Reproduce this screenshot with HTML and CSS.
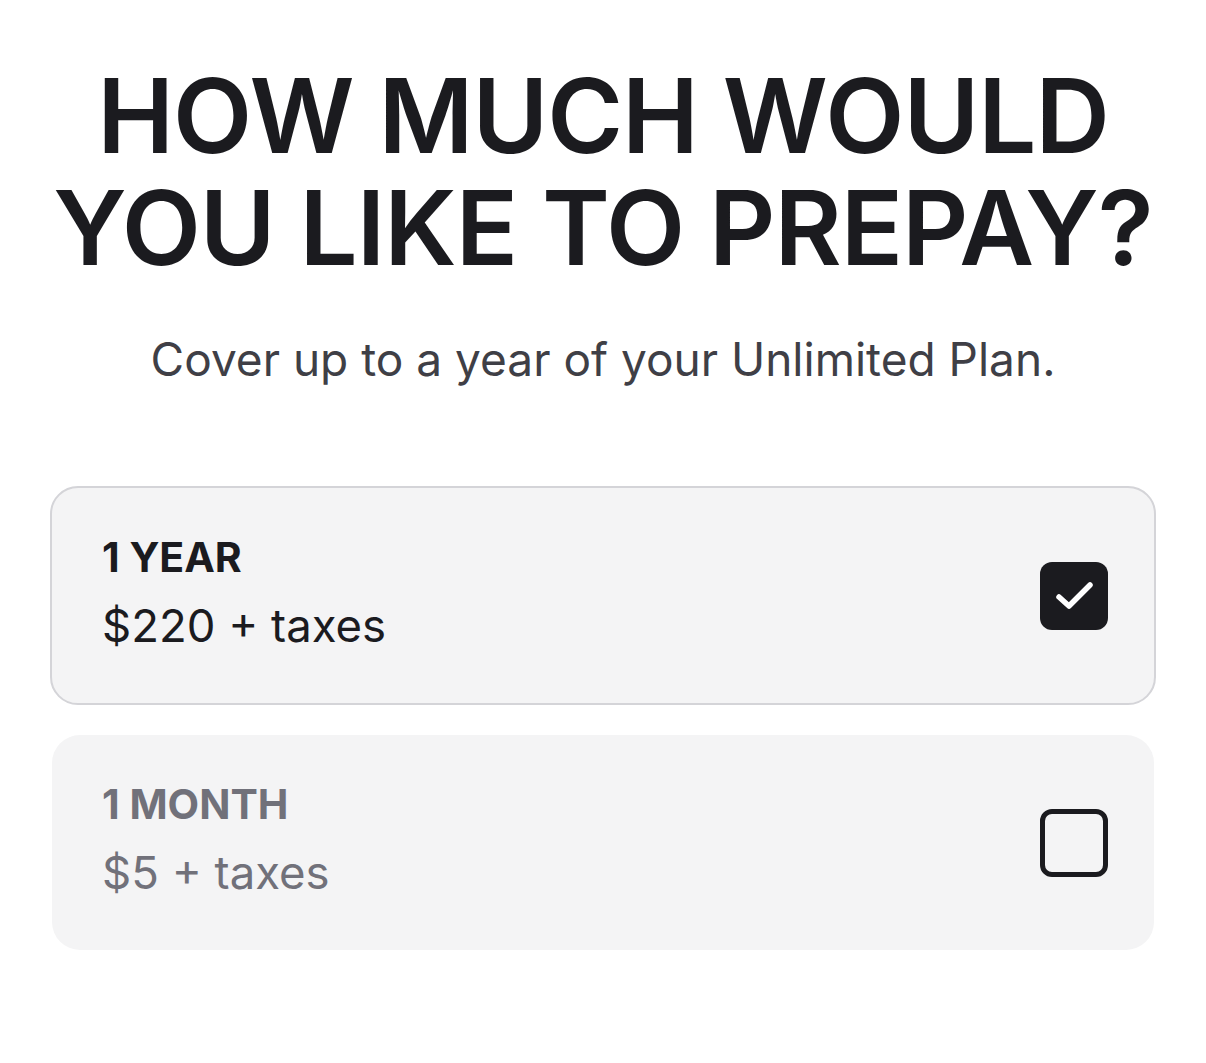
FILE: index.html
```html
<!DOCTYPE html>
<html lang="en">
<head>
    <meta charset="UTF-8">
    <meta name="viewport" content="width=device-width, initial-scale=1.0">
    <title>Prepay</title>
    <link rel="stylesheet" href="styles.css">
</head>
<body>

<div class="container">
    <h1>How much would<br>you like to prepay?</h1>
    <p class="subtitle">Cover up to a year of your Unlimited Plan.</p>

    <div class="options">
        <div class="option selected">
            <div class="option-text">
                <span class="option-title">1 Year</span>
                <span class="option-price">$220 + taxes</span>
            </div>
            <span class="checkbox checked">
                <svg viewBox="0 0 68 68" width="68" height="68">
                    <path d="M19 35 L29 44 L50 23" fill="none" stroke="#fff" stroke-width="5.5" stroke-linecap="round" stroke-linejoin="round"/>
                </svg>
            </span>
        </div>
        <div class="option">
            <div class="option-text">
                <span class="option-title">1 Month</span>
                <span class="option-price">$5 + taxes</span>
            </div>
            <span class="checkbox"></span>
        </div>
    </div>
</div>

</body>
</html>
```

FILE: styles.css
```css
body {
    margin: 0;
    font-family: Inter, "Noto Sans", sans-serif;
    background-color: #fff;
    color: #1b1b1f;
}
.container {
    padding: 60px 50px 0;
}
h1 {
    margin: 0;
    text-align: center;
    text-transform: uppercase;
    font-size: 103px;
    line-height: 112px;
    font-weight: 600;
    letter-spacing: -1px;
}
.subtitle {
    margin: 47px 0 0;
    text-align: center;
    font-size: 46px;
    color: #3f3f46;
}
.options {
    margin-top: 99px;
    display: flex;
    flex-direction: column;
    gap: 30px;
}
.option {
    display: flex;
    align-items: center;
    justify-content: space-between;
    height: 215px;
    padding: 0 46px 0 50px;
    margin: 0 2px;
    background-color: #f4f4f5;
    border-radius: 28px;
    box-sizing: border-box;
    color: #71717a;
}
.option.selected {
    margin: 0;
    height: 219px;
    border: 2px solid #d4d4d8;
    color: #1b1b1f;
}
.option-text {
    display: flex;
    flex-direction: column;
    gap: 16px;
    margin-top: -6px;
}
.option-title {
    font-size: 41px;
    font-weight: 700;
    text-transform: uppercase;
}
.option-price {
    font-size: 45.5px;
}
.checkbox {
    width: 68px;
    height: 68px;
    box-sizing: border-box;
    border: 5px solid #1b1b1f;
    border-radius: 12px;
}
.checkbox.checked {
    border: none;
    background-color: #1b1b1f;
}
.checkbox svg {
    display: block;
}
```
